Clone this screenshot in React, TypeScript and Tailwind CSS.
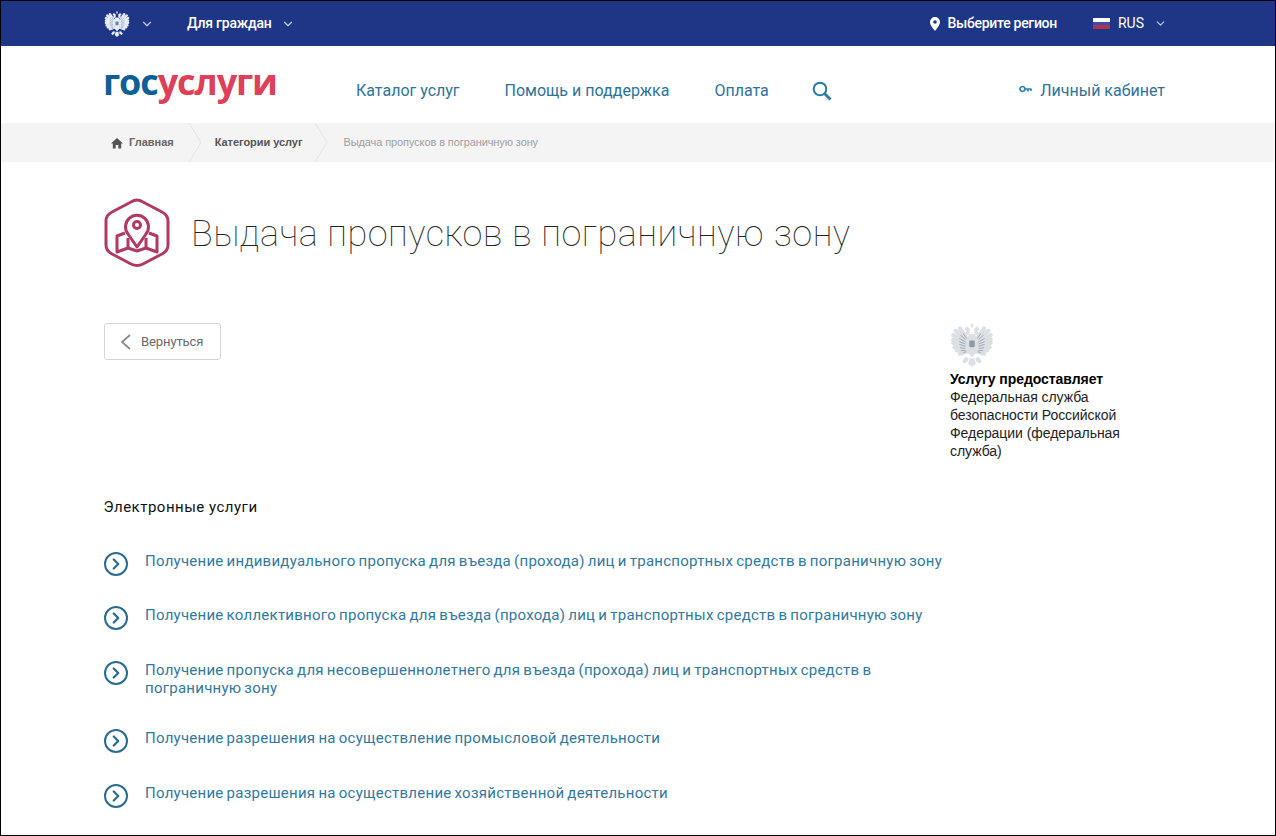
import React from 'react';
import { ChevronDown, ChevronRight } from 'lucide-react';

const services = [
  'Получение индивидуального пропуска для въезда (прохода) лиц и транспортных средств в пограничную зону',
  'Получение коллективного пропуска для въезда (прохода) лиц и транспортных средств в пограничную зону',
  'Получение пропуска для несовершеннолетнего для въезда (прохода) лиц и транспортных средств в пограничную зону',
  'Получение разрешения на осуществление промысловой деятельности',
  'Получение разрешения на осуществление хозяйственной деятельности',
];

// wing feathers: fan out from the shoulder
const feathers = [
  [15, 14, 9, 5], [14, 15, 5, 7], [14, 17, 3, 11], [14, 19, 3, 15], [14, 21, 3, 18],
  [14, 23, 4, 22], [14, 25, 6, 25], [15, 26, 9, 28],
];

const Wing = ({ color, dim }: { color: string; dim: string }) => (
  <g>
    {feathers.map(([x1, y1, x2, y2]) => (
      <path key={`${x2}-${y2}`} d={`M${x1} ${y1}L${x2} ${y2}`} stroke={color} strokeWidth="3.800" strokeLinecap="round" />
    ))}
    {feathers.map(([x1, y1, x2, y2]) => (
      <path key={`d${x2}-${y2}`} d={`M${x1} ${y1}L${(x1 + x2) / 2} ${(y1 + y2) / 2}`} stroke={dim} strokeWidth="0.7" />
    ))}
    <path d="M15 3l3 2 0 4-2 2-2-1 1-3-2-1z" fill={color} />
    <path d="M14 31l3 1-1 3-3 2-2-2z" fill={color} />
  </g>
);

const Eagle = ({ className, color, dim }: { className: string; color: string; dim: string }) => (
  <svg viewBox="0 0 40 40" className={className} fill={color}>
    <Wing color={color} dim={dim} />
    <g transform="matrix(-1 0 0 1 40 0)">
      <Wing color={color} dim={dim} />
    </g>
    <path d="M20 0l1.500 2-1 1 1 1h-3l1-1-1-1z" />
    <path d="M17 10h6l2 8-1 9-4 4-4-4-1-9z" />
    <path d="M18 32h4l1.500 5-3.500 3-3.500-3z" />
    <rect x="17.500" y="16" width="5" height="6" rx="1" fill={dim} />
  </svg>
);

const ArrowSep = () => (
  <svg viewBox="0 0 14 39" className="w-[14px] h-[39px] text-[#e2e2e2]" fill="none" stroke="currentColor">
    <path d="M1 0l12 19.500L1 39" />
  </svg>
);

const App: React.FC = () => {
  return (
    <div className="w-[1276px] h-[836px] overflow-hidden border border-black bg-white font-['Roboto',sans-serif]">
      <div className="h-[45px] bg-[#1e3685] text-white flex items-center pl-[103px] pr-[108px]">
        <Eagle className="w-[26px] h-[26px]" color="#e8ecf5" dim="#6f80b8" />
        <ChevronDown className="w-[14px] h-[14px] ml-[10px] text-[#c5cde6]" />
        <span className="ml-[33px] text-[14px] font-medium tracking-[-0.2px]">Для граждан</span>
        <ChevronDown className="w-[14px] h-[14px] ml-[9px] text-[#c5cde6]" />
        <div className="ml-auto flex items-center">
          <svg viewBox="0 0 10 14" className="w-[10px] h-[14px]" fill="#ffffff" fillRule="evenodd">
            <path d="M5 0a5 5 0 0 1 5 5c0 3-3 6.500-5 9-2-2.500-5-6-5-9a5 5 0 0 1 5-5zm0 3.200a1.800 1.800 0 1 0 0 3.600 1.800 1.800 0 0 0 0-3.600z" />
          </svg>
          <span className="ml-[8px] text-[14px] font-medium tracking-[-0.3px]">Выберите регион</span>
          <div className="ml-[36px] w-[17px] h-[11px] flex flex-col">
            <div className="h-1/3 bg-white" />
            <div className="h-1/3 bg-[#3a4fa5]" />
            <div className="h-1/3 bg-[#b0334f]" />
          </div>
          <span className="ml-[8px] text-[14px]">RUS</span>
          <ChevronDown className="w-[13px] h-[13px] ml-[10px] text-[#c5cde6]" />
        </div>
      </div>

      <div className="h-[77px] flex items-center pl-[102px] pr-[110px]">
        <div className="w-[253px] text-[36px] leading-none font-bold font-['Open_Sans',sans-serif] tracking-[-1.1px] -mt-[5px]">
          <span className="text-[#0d5f95]">гос</span>
          <span className="text-[#dd4058]">услуги</span>
        </div>
        <nav className="flex items-center text-[16px] text-[#2e7398] mt-[12px]">
          <span>Каталог услуг</span>
          <span className="ml-[45px]">Помощь и поддержка</span>
          <span className="ml-[45px]">Оплата</span>
          <svg viewBox="0 0 20 20" className="ml-[43px] w-[20px] h-[20px] text-[#2a7aa3]" fill="none" stroke="currentColor">
            <circle cx="8" cy="8" r="6.300" strokeWidth="2" />
            <path d="M12.500 12.500L18.500 18.500" strokeWidth="2.800" />
          </svg>
        </nav>
        <div className="ml-auto flex items-center text-[16px] text-[#2e7398] mt-[12px]">
          <svg viewBox="0 0 13 8" className="w-[13px] h-[8px] text-[#2a82ae] -mt-[3px]" fill="none" stroke="currentColor" strokeWidth="1.700">
            <circle cx="3.500" cy="4" r="2.500" />
            <path d="M6 4h6.500M9 4v2.500M12 4v2" />
          </svg>
          <span className="ml-[8px]">Личный кабинет</span>
        </div>
      </div>

      <div className="h-[39px] bg-[#f4f4f4] flex items-center pl-[110px] text-[11px] font-['Liberation_Sans',sans-serif]">
        <svg viewBox="0 0 12 12" className="w-[12px] h-[12px]" fill="#555555">
          <path d="M6 1l6 5.500h-1.800V11.500H7.300V8H4.700v3.500H1.800V6.500H0z" />
        </svg>
        <span className="ml-[6px] font-bold text-[#666666]">Главная</span>
        <div className="ml-[14px]"><ArrowSep /></div>
        <span className="ml-[13px] font-bold text-[#555555] tracking-[-0.05px]">Категории услуг</span>
        <div className="ml-[12px]"><ArrowSep /></div>
        <span className="ml-[15px] text-[#a0a0a0] tracking-[-0.1px]">Выдача пропусков в пограничную зону</span>
      </div>

      <div className="pl-[103px] pr-[110px]">
        <div className="flex items-center mt-[35px]">
          <svg viewBox="0 0 66 72" className="w-[66px] h-[72px] text-[#b03a62]" fill="none" stroke="currentColor" strokeWidth="3" strokeLinejoin="round">
            <path d="M33 3 Q36 3 39 5 L58 15 Q64 18 64 24 V48 Q64 54 58 57 L39 67 Q33 70 27 67 L8 57 Q2 54 2 48 V24 Q2 18 8 15 L27 5 Q30 3 33 3Z" />
            <path d="M33 50 L24 37 A11.500 11.500 0 1 1 42 37Z" />
            <circle cx="33" cy="28" r="3.500" />
            <path d="M21 36 L13 39 V55 L24 51 L33 54 L42 51 L53 55 V39 L45 36" />
            <path d="M24 41 V51 M42 41 V51" />
          </svg>
          <h1 className="ml-[21px] text-[36px] font-thin text-[#222222] tracking-[0.5px] leading-none mt-[1px]">
            Выдача пропусков в пограничную зону
          </h1>
        </div>

        <div className="flex mt-[54px]">
          <div className="w-[846px]">
            <div className="w-[117px] h-[37px] border border-[#d5d5d5] rounded-[3px] flex items-center pl-[15px] text-[13px] text-[#6a6a6a] tracking-[-0.1px]">
              <svg viewBox="0 0 11 16" className="w-[11px] h-[16px] text-[#8a8a8a]" fill="none" stroke="currentColor" strokeWidth="1.800">
                <path d="M10 1L2 8l8 7" />
              </svg>
              <span className="ml-[10px]">Вернуться</span>
            </div>
          </div>
          <div className="w-[180px] text-[14px] leading-[18px] text-[#222222] font-['Liberation_Sans',sans-serif] tracking-[-0.05px]">
            <Eagle className="w-[44px] h-[44px]" color="#dce0e5" dim="#8f9aa6" />
            <div className="font-bold text-black mt-[3px]">Услугу предоставляет</div>
            <div>Федеральная служба безопасности Российской Федерации (федеральная служба)</div>
          </div>
        </div>

        <div className="mt-[36px] text-[15px] text-[#111111] tracking-[0.5px] -ml-[0.5px]">Электронные услуги</div>

        <div className="mt-[33px] w-[840px] flex flex-col">
          {services.map((s) => (
            <div key={s} className="flex items-start min-h-[54.7px] pb-[32px]">
              <div className="w-[24px] h-[24px] -mb-[6px] rounded-full border-2 border-[#2a6c8f] flex items-center justify-center shrink-0">
                <ChevronRight className="w-[18px] h-[18px] text-[#2a6c8f]" strokeWidth={3} />
              </div>
              <span className="ml-[17px] text-[15px] leading-[18px] text-[#31789e] tracking-[0.25px] [word-spacing:-0.9px]">{s}</span>
            </div>
          ))}
        </div>
      </div>
    </div>
  );
};

export default App;
